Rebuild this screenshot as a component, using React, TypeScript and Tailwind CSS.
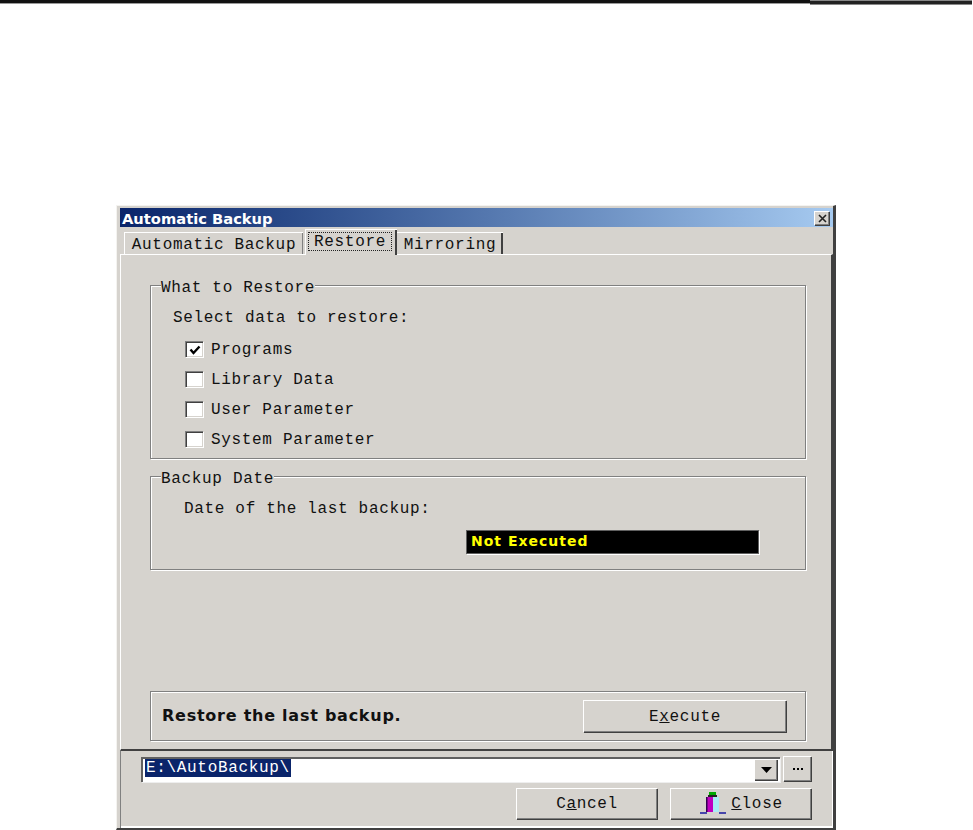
import React from 'react';

const mono = "font-['Liberation_Mono',monospace] font-medium text-[16px] tracking-[0.67px] text-[#111]";
const bevel = "bg-[#d6d3ce] border-t border-l border-t-white border-l-white shadow-[inset_-1px_-1px_0_#808080,1px_1px_0_#404040]";
const etched = "border border-[#808080] shadow-[inset_1px_1px_0_#fff,1px_1px_0_#fff]";

const Check: React.FC<{ label: string; checked?: boolean }> = ({ label, checked }) => (
  <div className="flex items-center h-[30px] pl-[34px] gap-[8px]">
    <span className="w-[18px] h-[16px] bg-white border-t border-l border-[#808080] shadow-[1px_1px_0_#fff,inset_1px_1px_0_#404040,inset_-1px_-1px_0_#d6d3ce] flex items-center justify-center">
      {checked && (
        <svg width="12" height="10" viewBox="0 0 12 10">
          <path d="M1.5 4.5 L4.5 8 L10.5 1.5" fill="none" stroke="#000" strokeWidth="2.4" />
        </svg>
      )}
    </span>
    <span className={`pt-[2px] ${mono}`}>{label}</span>
  </div>
);

const Group: React.FC<{ title: string; className: string; children: React.ReactNode }> = ({ title, className, children }) => (
  <div className={`relative ${etched} ${className}`}>
    <span className={`absolute left-[10px] top-[-8px] bg-[#d6d3ce] leading-[20px] ${mono}`}>{title}</span>
    {children}
  </div>
);

const CloseIcon = () => (
  <svg width="28" height="26" viewBox="0 0 28 26">
    <rect x="10" y="1" width="7" height="3" fill="#00a800" />
    <rect x="9" y="4" width="9" height="2" fill="#222" />
    <rect x="7" y="6" width="7" height="15" fill="#c000c0" />
    <rect x="7" y="6" width="1.5" height="15" fill="#300050" />
    <rect x="14" y="6" width="6" height="15" fill="#a8ecf4" />
    <path d="M1 22 H8 M20 22 H27" stroke="#1818a0" strokeWidth="1.5" />
  </svg>
);

export default function App() {
  return (
    <div className="w-[973px] h-[830px] bg-white overflow-hidden">
      {/* Page rule */}
      <div className="flex items-start h-[5px]">
        <div className="w-[810px] h-[4px] bg-[#111] border-b border-[#999]" />
        <div className="w-[162px] h-[5px] bg-[#222] border-y border-[#888]" />
      </div>

      {/* Dialog */}
      <div className="mt-[200px] ml-[116px] w-[720px] h-[625px] bg-[#d6d3ce] border-t border-l border-t-[#f4f3f0] border-l-[#f4f3f0] border-r-[3px] border-r-[#404040] border-b-2 border-b-[#404040] flex flex-col pl-[3px] pt-[2px]">
        {/* Title bar */}
        <div className="h-[19px] w-[713px] shrink-0 bg-gradient-to-r from-[#0a246a] to-[#a6caf0] flex items-center justify-between pl-[2px] pr-[4px]">
          <span className="font-['DejaVu_Sans',sans-serif] font-bold text-[14.7px] leading-[19px] pt-[1px] text-white">Automatic Backup</span>
          <span className={`w-[15px] h-[14px] flex items-center justify-center ${bevel}`}>
            <svg width="9" height="9" viewBox="0 0 9 9">
              <path d="M1 1 L8 8 M8 1 L1 8" stroke="#222" strokeWidth="1.6" />
            </svg>
          </span>
        </div>

        {/* Tabs */}
        <div className="h-[27px] shrink-0 flex items-end pl-[4px] gap-[2px] relative z-10">
          <div className="w-[179px] h-[22px] border-t border-l border-white bg-[#d6d3ce] text-center leading-[20px] shadow-[inset_-1px_0_0_#808080]">
            <span className={mono}>Automatic Backup</span>
          </div>
          <div className="w-[92px] h-[26px] -mb-px border-t border-l border-white bg-[#d6d3ce] shadow-[inset_-2px_0_0_#404040] pt-[2px] pl-[2px]">
            <div className={`w-[84px] h-[19px] border border-dotted border-[#222] text-center leading-[18px] ${mono}`}>Restore</div>
          </div>
          <div className="w-[106px] -ml-[2px] h-[22px] bg-[#d6d3ce] border-t border-white text-center leading-[20px] shadow-[inset_-2px_0_0_#404040]">
            <span className={mono}>Mirroring</span>
          </div>
        </div>

        {/* Tab pane */}
        <div className="h-[497px] w-[713px] shrink-0 border-t border-l border-t-white border-l-white border-r-2 border-r-[#404040] border-b-2 border-b-[#404040] pl-[29px] pt-[30px]">
          <Group title="What to Restore" className="w-[656px] h-[174px]">
            <div className={`mt-[22px] pl-[22px] leading-[20px] ${mono}`}>Select data to restore:</div>
            <div className="mt-[6px]">
              <Check label="Programs" checked />
              <Check label="Library Data" />
              <Check label="User Parameter" />
              <Check label="System Parameter" />
            </div>
          </Group>

          <Group title="Backup Date" className="w-[656px] h-[94px] mt-[17px]">
            <div className={`mt-[22px] pl-[33px] leading-[20px] ${mono}`}>Date of the last backup:</div>
            <div className="mt-[11px] ml-[315px] w-[293px] h-[24px] bg-black border border-[#606060] shadow-[1px_1px_0_#fff] pl-[4px] font-['DejaVu_Sans',sans-serif] font-bold text-[14px] tracking-[1px] leading-[20px] text-[#ffff00]">
              Not Executed
            </div>
          </Group>

          <div className={`w-[656px] h-[50px] mt-[121px] flex items-center justify-between pl-[11px] pr-[19px] ${etched}`}>
            <span className="font-['DejaVu_Sans',sans-serif] font-bold text-[16px] tracking-[0.75px] text-[#111]">Restore the last backup.</span>
            <button className={`w-[203px] h-[32px] pt-[1px] ${mono} ${bevel}`}>
              E<span className="underline">x</span>ecute
            </button>
          </div>
        </div>

        {/* Path and dialog buttons */}
        <div className="flex-1 w-[713px] border-l border-[#808080] shadow-[inset_0_-2px_0_#fff,inset_-1px_0_0_#fff] pl-[20px] pt-[5px]">
          <div className="flex items-start gap-[3px] w-[671px]">
            <div className="w-[639px] h-[25px] mt-[1px] bg-white border-t-2 border-l-2 border-[#606060] shadow-[1px_1px_0_#eee] flex items-start justify-between pl-[2px] pr-[3px]">
              <span className={`h-[18px] px-[1px] bg-[#0a246a] leading-[19px] ${mono} text-white`}>E:\AutoBackup\</span>
              <span className={`w-[23px] h-[21px] flex items-center justify-center ${bevel}`}>
                <svg width="11" height="6" viewBox="0 0 11 6">
                  <path d="M0 0 H11 L5.5 6 Z" fill="#000" />
                </svg>
              </span>
            </div>
            <button className={`w-[28px] h-[25px] flex items-center justify-center gap-[2px] ${bevel}`}>
              <span className="w-[2px] h-[2px] bg-black" />
              <span className="w-[2px] h-[2px] bg-black" />
              <span className="w-[2px] h-[2px] bg-black" />
            </button>
          </div>
          <div className="flex justify-end gap-[13px] w-[670px] mt-[6px]">
            <button className={`w-[141px] h-[31px] ${mono} ${bevel}`}>
              C<span className="underline">a</span>ncel
            </button>
            <button className={`w-[141px] h-[31px] flex items-center justify-center gap-[4px] ${mono} ${bevel}`}>
              <CloseIcon />
              <span><span className="underline">C</span>lose</span>
            </button>
          </div>
        </div>
      </div>
    </div>
  );
}
